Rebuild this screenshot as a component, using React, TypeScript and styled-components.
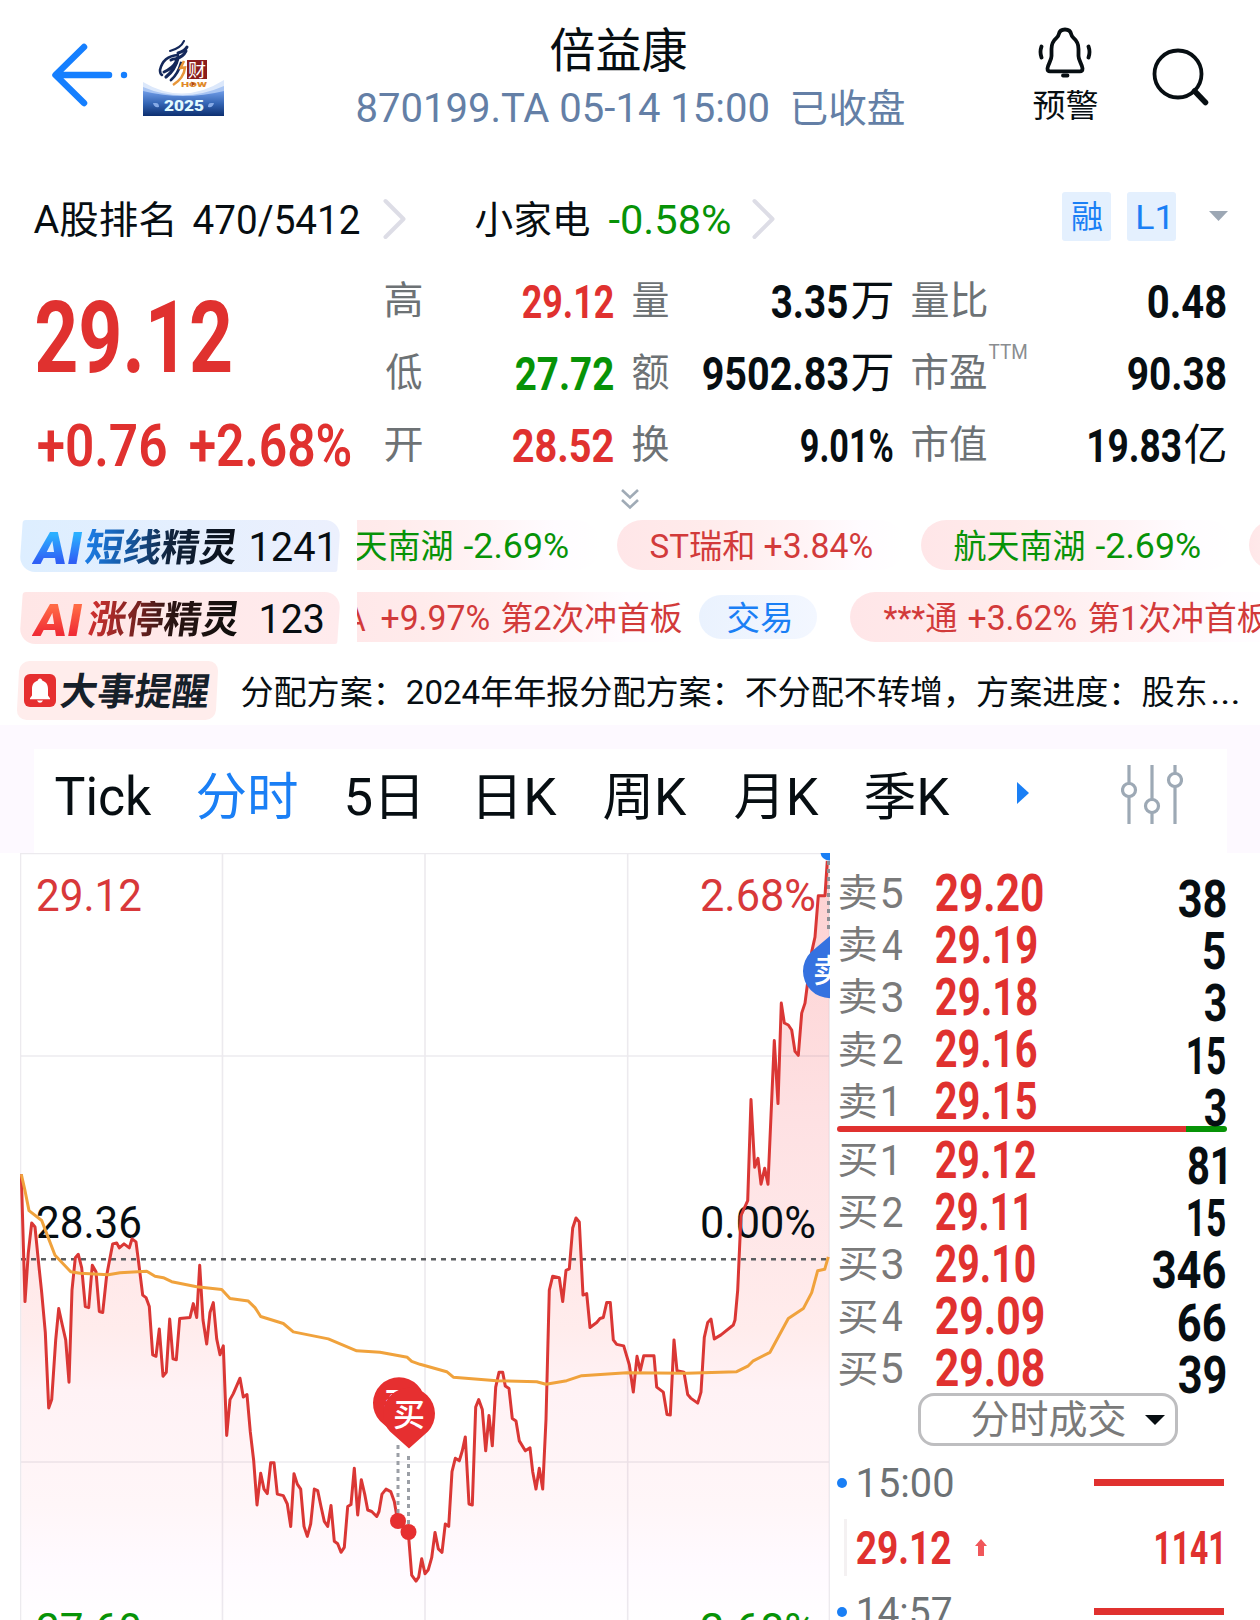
import React, { useLayoutEffect, useState } from "react";
import styled, { createGlobalStyle } from "styled-components";

const FONT = 'Roboto, "Noto Sans CJK SC", sans-serif';
const RED = "#e0312f";
const GREEN = "#079307";
const INK = "#070e12";
const GREY = "#6d7275";
const BLUE = "#1a7ff5";
const UP_TEXT = "#d23a3a";

const GlobalStyle = createGlobalStyle`
  body { margin: 0; background: #fff; font-family: ${FONT}; color: ${INK}; overflow: hidden; }
  * { box-sizing: border-box; }
  svg { display: block; flex: none; }
`;

/* ---------- text set to an exact measure ---------- */

const FitBox = styled.span<{ $w: number; $size: number }>`
  display: inline-block;
  flex: none;
  width: ${(p) => p.$w}px;
  height: ${(p) => p.$size}px;
  line-height: ${(p) => p.$size}px;
  font-size: ${(p) => p.$size}px;
`;
const FitInner = styled.span<{ $color: string; $weight: number; $fill?: string }>`
  display: inline-block;
  white-space: pre;
  transform-origin: 0 50%;
  color: ${(p) => (p.$fill ? "transparent" : p.$color)};
  font-weight: ${(p) => p.$weight};
  ${(p) => p.$fill && `background: ${p.$fill}; background-clip: text; -webkit-background-clip: text;`}
`;

type FitProps = {
  children: string;
  w: number;
  size: number;
  color?: string;
  weight?: number;
  fill?: string;
  slant?: number;
};

let pen: CanvasRenderingContext2D | null = null;

function Fit({ children, w, size, color = INK, weight = 400, fill, slant = 0 }: FitProps) {
  const [t, setT] = useState("none");
  useLayoutEffect(() => {
    pen = pen || document.createElement("canvas").getContext("2d");
    if (!pen) return;
    pen.font = `${weight} ${size}px ${FONT}`;
    const m = pen.measureText(children);
    const left = -m.actualBoundingBoxLeft;
    const k = w / (m.actualBoundingBoxRight - left);
    setT(`translate(${0.5 - left * k}px, 0.5px) skewX(${-slant}deg) scaleX(${k})`);
  }, [children, w, size, weight, slant]);
  return (
    <FitBox $w={w} $size={size}>
      <FitInner $color={color} $weight={weight} $fill={fill} style={{ transform: t }}>
        {children}
      </FitInner>
    </FitBox>
  );
}

/* ---------- page ---------- */

const Screen = styled.main`
  width: 1260px;
  height: 1620px;
  overflow: hidden;
  background: #fff;
  display: flex;
  flex-direction: column;
`;

const Header = styled.header`
  height: 178px;
  flex: none;
  display: grid;
  grid-template-columns: 330px 600px 330px;
`;
const HeaderLeft = styled.div`
  display: flex;
  align-items: flex-start;
  padding: 40px 0 0 50px;
  gap: 15px;
`;
const HeaderTitle = styled.div`
  display: flex;
  flex-direction: column;
  align-items: center;
  padding-top: 21px;
`;
const NameRow = styled.div`
  height: 56px;
  padding-right: 25px;
  display: flex;
  align-items: center;
`;
const CodeRow = styled.div`
  height: 62px;
  display: flex;
  align-items: center;
  gap: 24px;
`;
const HeaderRight = styled.div`
  display: flex;
  padding: 25px 0 0 103px;
  gap: 54px;
`;
const Alert = styled.button`
  border: 0;
  padding: 0;
  background: none;
  width: 64px;
  display: flex;
  flex-direction: column;
  align-items: center;
  gap: 11px;
  font-family: inherit;
`;
const SearchWrap = styled.div`
  padding-top: 21px;
`;

const RankRow = styled.section`
  height: 82px;
  flex: none;
  display: flex;
  align-items: center;
  padding: 0 32px 0 33px;
`;
const Gap = styled.span<{ $w: number }>`
  flex: none;
  width: ${(p) => p.$w}px;
`;
const Tags = styled.div`
  margin-left: auto;
  display: flex;
  align-items: center;
  gap: 16px;
  padding-bottom: 6px;
`;
const Tag = styled.span`
  width: 49px;
  height: 49px;
  border-radius: 3px;
  background: #e4f0fe;
  display: flex;
  align-items: center;
  justify-content: center;
`;
const CaretWrap = styled.span`
  padding-left: 17px;
`;

const Quote = styled.section`
  height: 222px;
  flex: none;
  display: grid;
  grid-template-columns: 349px 228px 279px 333px;
  padding: 4px 0 0 36px;
`;
const PriceCol = styled.div`
  display: flex;
  flex-direction: column;
`;
const BigPrice = styled.div`
  height: 145px;
  display: flex;
  align-items: center;
`;
const Change = styled.div`
  height: 72px;
  padding-left: 1px;
  display: flex;
  align-items: center;
  gap: 23px;
`;
const StatCol = styled.div<{ $pl?: number }>`
  padding-left: ${(p) => p.$pl || 0}px;
`;
const Stat = styled.div`
  height: 72.3px;
  display: flex;
  align-items: center;
`;
const Sup = styled.span`
  align-self: flex-start;
  display: flex;
  padding: 5px 0 0 2px;
`;
const StatValue = styled.span`
  margin-left: auto;
  display: flex;
  align-items: center;
  gap: 4px;
`;
const Expand = styled.div`
  height: 34px;
  flex: none;
  display: flex;
  justify-content: center;
  padding-top: 6px;
`;

const TickerRow = styled.section`
  height: 72px;
  flex: none;
  display: flex;
  align-items: flex-start;
  padding: 4px 0 0 20px;
`;
const Genie = styled.div<{ $bg: string }>`
  position: relative;
  z-index: 0;
  width: 320px;
  height: 52px;
  padding: 2px 0 0 13px;
  display: flex;
  align-items: center;
  &::before {
    content: "";
    position: absolute;
    z-index: -1;
    inset: 0 1px;
    transform: skewX(-4deg);
    border-radius: 3px 16px 2px 16px;
    background: ${(p) => p.$bg};
  }
`;
const Marquee = styled.div<{ $shift: number }>`
  margin-left: 17px;
  width: 903px;
  height: 52px;
  overflow: hidden;
  display: flex;
  justify-content: flex-start;
  & > :first-child { margin-left: ${(p) => -p.$shift}px; }
`;
const Pill = styled.div<{ $tight?: boolean }>`
  flex: none;
  height: 50px;
  margin-right: 16px;
  padding: 1px ${(p) => (p.$tight ? 2 : 33)}px 0 33px;
  border-radius: ${(p) => (p.$tight ? "25px 0 0 25px" : "25px")};
  background: linear-gradient(90deg, #ffe6e8 0%, #ffebeb 30%, #fff4f6 65%, #fffcff 85%, #fff 100%);
  display: flex;
  align-items: center;
  gap: 12px;
`;
const Wide = styled.span`
  padding-left: 4px;
  display: flex;
`;
const TradePill = styled.button`
  flex: none;
  border: 0;
  width: 118px;
  height: 44px;
  margin: 3px 33px 0 0;
  border-radius: 22px;
  background: linear-gradient(90deg, #eaf2fe, #f3f7ff);
  display: flex;
  align-items: center;
  justify-content: center;
  font-family: inherit;
  padding: 0;
`;

const EventRow = styled.section`
  height: 65px;
  flex: none;
  display: flex;
  align-items: flex-start;
  padding: 1px 0 0 17px;
`;
const EventBadge = styled.div`
  position: relative;
  z-index: 0;
  width: 201px;
  height: 59px;
  padding: 0 0 0 7px;
  display: flex;
  align-items: center;
  gap: 5px;
  &::before {
    content: "";
    position: absolute;
    z-index: -1;
    inset: 0 1px;
    transform: skewX(-3deg);
    border-radius: 10px;
    background: #ffedec;
  }
`;
const EventText = styled.div`
  height: 60px;
  margin-left: 23px;
  display: flex;
  align-items: center;
  gap: 6px;
`;

const TabBand = styled.nav`
  height: 128px;
  flex: none;
  background: #fdf9ff;
  padding: 24px 33px 0 34px;
`;
const TabBar = styled.div`
  height: 104px;
  background: #fff;
  display: flex;
  align-items: center;
  padding: 0 44px 10px 21px;
`;
const PlayWrap = styled.span`
  padding: 0 0 6px 1px;
`;
const SettingsWrap = styled.span`
  margin-left: auto;
  padding-bottom: 3px;
`;

const Body = styled.section`
  flex: 1;
  min-height: 0;
  display: flex;
  padding-left: 20px;
`;

const Book = styled.aside`
  width: 430px;
  padding: 13px 33px 0 7px;
  display: flex;
  flex-direction: column;
`;
const BookRow = styled.div`
  flex: none;
  height: 52.2px;
  padding: 0 2px;
  display: flex;
  align-items: center;
`;
const BookLabel = styled.span`
  width: 96px;
  display: flex;
  align-items: center;
  gap: 6px;
`;
const Volume = styled.span`
  margin-left: auto;
  padding-top: 13px;
  display: flex;
`;
const Ratio = styled.div`
  flex: none;
  height: 6px;
  margin: -1px 0 1px;
  border-radius: 3px;
  background: linear-gradient(90deg, ${RED} 89.4%, ${GREEN} 89.4%);
`;
const Select = styled.button`
  flex: none;
  align-self: flex-start;
  margin: -1px 0 1px 81px;
  width: 260px;
  height: 53px;
  border: 3px solid #bebec0;
  border-radius: 16px;
  background: #fff;
  padding: 1px 10px 0 50px;
  display: flex;
  align-items: center;
  gap: 20px;
  font-family: inherit;
`;
const Deal = styled.div`
  flex: none;
  height: 129px;
`;
const DealTime = styled.div`
  height: 72px;
  display: flex;
  align-items: center;
  gap: 11px;
`;
const Dot = styled.i`
  width: 10px;
  height: 10px;
  border-radius: 50%;
  background: ${BLUE};
`;
const DealBar = styled.i`
  margin: 0 3px 0 auto;
  width: 130px;
  height: 7px;
  background: ${RED};
`;
const DealPrice = styled.div`
  height: 57px;
  margin-left: 7px;
  padding: 0 6px 0 9px;
  border-left: 3px solid #f4f1f2;
  display: flex;
  align-items: center;
`;
const DealQty = styled.span`
  margin-left: auto;
  display: flex;
`;

/* ---------- icons ---------- */

const BackIcon = () => (
  <svg width="78" height="70" viewBox="0 0 78 70" fill="none" stroke="#157fff" strokeWidth="6.5" strokeLinecap="round" strokeLinejoin="round">
    <path d="M34 7 5.500 35 34 63M6 35H59" />
    <circle cx="74" cy="35" r="3.200" fill="#157fff" stroke="none" />
  </svg>
);

const ShowLogo = () => (
  <svg width="81" height="76" viewBox="0 0 81 76">
    <defs>
      <linearGradient id="lgSky" x1="0" y1="0" x2="0" y2="1">
        <stop offset="0" stopColor="#6f9be6" />
        <stop offset=".5" stopColor="#3465b4" />
        <stop offset="1" stopColor="#0d2f70" />
      </linearGradient>
    </defs>
    <path d="M0 42Q40 66 81 40V76H0Z" fill="#dce8fb" />
    <path d="M0 47Q40 64 81 46V76H0Z" fill="#a9c5f3" />
    <path d="M0 51Q40 61 81 51V76H0Z" fill="url(#lgSky)" />
    <g fill="none" stroke="#14285a" strokeLinecap="round">
      <path d="M41 1Q38 8 27 11" strokeWidth="2" />
      <path d="M44 7Q42 11 35 13" strokeWidth="3" />
      <path d="M43 11Q40 17 34 18" strokeWidth="3" />
      <path d="M35 15Q20 16 17 30Q17 34 19 35" strokeWidth="2.600" />
      <path d="M28 20Q34 17 33 22Q30 28 21 32" strokeWidth="3" />
      <path d="M35 18Q32 30 23 37" strokeWidth="3.200" />
      <path d="M38 23Q35 34 28 40" strokeWidth="2.800" />
    </g>
    <path d="M41 21 37.500 28 42 27.500Q41 38 30 45" fill="none" stroke="#e8963a" strokeWidth="2.600" />
    <rect x="44" y="20" width="20" height="19" fill="#8a1d1c" />
    <text x="54" y="36.500" textAnchor="middle" fontSize="18" fontFamily={FONT} fill="#fff">财</text>
    <text x="51" y="46.500" textAnchor="middle" fontSize="7.500" fontWeight="900" textLength="26" lengthAdjust="spacingAndGlyphs" fontFamily={FONT} fill="#e08a2c">HOW</text>
    <path d="m48.500 41.500 4 2.500-4 2.500z" fill="#b44a17" />
    <text x="41" y="71" textAnchor="middle" fontSize="15" fontWeight="900" textLength="40" lengthAdjust="spacingAndGlyphs" fontFamily={FONT} fill="#e2fbff">2025</text>
    <path d="M10 63q1 5 6 4q0-4-3-4M71 63q-1 5-6 4q0-4 3-4" fill="#86aae6" />
  </svg>
);

const BellIcon = () => (
  <svg width="54" height="53" viewBox="0 0 54 53" fill="none" stroke={INK} strokeWidth="3.800" strokeLinecap="round" strokeLinejoin="round">
    <path d="M27 4.500c-3.500 0-5.600 1.800-6.200 4.600-.4 2-1 2.600-2.300 3.800-3.500 3-5 6-5 11.100v7c0 4.500-3.500 8-4 12.500 0 2 1 2.800 2.500 2.800h30c1.500 0 2.500-.8 2.500-2.800-.5-4.500-4-8-4-12.500v-7c0-5.100-1.500-8.100-5-11.100-1.300-1.200-1.900-1.800-2.300-3.800C32.600 6.300 30.500 4.500 27 4.500Z" />
    <path d="M3.500 21.500Q1.500 27 3.500 32.500M50.500 21.500Q52.500 27 50.500 32.500M25 50.500h4.500" />
  </svg>
);

const SearchIcon = () => (
  <svg width="60" height="62" viewBox="0 0 60 62" fill="none" stroke={INK} strokeLinecap="round">
    <circle cx="27" cy="28" r="23.500" strokeWidth="3.800" />
    <path d="m43.500 45 11 11.500" strokeWidth="5.500" />
  </svg>
);

const ChevronIcon = () => (
  <svg width="24" height="42" viewBox="0 0 24 42" fill="none" stroke="#dddde6" strokeWidth="4" strokeLinecap="round" strokeLinejoin="round">
    <path d="M3.500 3 21.500 21 3.500 39" />
  </svg>
);

const Caret = ({ w, h, color }: { w: number; h: number; color: string }) => (
  <svg width={w} height={h} viewBox="0 0 20 10" preserveAspectRatio="none">
    <path d="M0 0H20L10 10Z" fill={color} />
  </svg>
);

const DoubleChevron = () => (
  <svg width="18" height="22" viewBox="0 0 18 22" fill="none" stroke="#a0abb6" strokeWidth="2.600">
    <path d="m1 2 8 7.500L17 2M1 12l8 7.500 8-7.500" />
  </svg>
);

const EventBell = () => (
  <svg width="32" height="33" viewBox="0 0 32 33">
    <rect width="32" height="33" rx="6" fill="#e62f30" />
    <path d="M16 4.500c1.400 0 2 1 2.200 2C22.500 8 24 11 24 15v6.500l2 2.800v1H6v-1l2-2.800V15c0-4 1.500-7 5.800-8.500.2-1 .8-2 2.200-2ZM13 26.500h6q-1 2.200-3 2.200t-3-2.200Z" fill="#fff" />
  </svg>
);

const SlidersIcon = () => (
  <svg width="62" height="59" viewBox="0 0 62 59" fill="#fff" stroke="#9da9b5" strokeWidth="3.200">
    <path d="M8 0V59M31 0V59M54 0V59" />
    <circle cx="8" cy="25" r="6.500" />
    <circle cx="31" cy="41" r="6.500" />
    <circle cx="54" cy="15" r="6.500" />
  </svg>
);

const PlayIcon = () => (
  <svg width="12" height="22" viewBox="0 0 12 22">
    <path d="M0 0 12 11 0 22Z" fill={BLUE} />
  </svg>
);

const UpArrow = () => (
  <svg width="12" height="17" viewBox="0 0 12 17">
    <path d="M6 0 12 7H9V17H3V7H0Z" fill="#f0575a" />
  </svg>
);

/* ---------- intraday chart ---------- */

/* Samples are [time, level] pairs; three time units and about two level units make one pixel. */
const PRICE = `64,672 75,928 85,830 95,770 105,778 115,845 125,910 136,990 146,1142 155,1125 167,1005 176,942 187,975 197,1005 207,1090
216,905 226,840 235,833 245,860 256,938 266,940 277,855 288,868 298,948 308,950 320,875 338,812 350,810 358,820 372,812 388,820 396,802
408,808 418,860 428,915 438,920 448,938 458,1035 468,1038 478,983 489,1078 499,1070 509,963 519,1043 529,1045 539,962 570,960 580,932
590,960 599,855 609,965 620,1013 630,950 640,930 650,1003 660,1035 670,1017 680,1197 690,1125 700,1113 720,1082 730,1120 741,1115
751,1190 761,1248 771,1337 782,1273 792,1305 802,1314 812,1252 822,1252 832,1315 850,1318 862,1335 872,1380 882,1274 892,1295 902,1305
912,1380 922,1400 932,1375 943,1305 953,1308 963,1340 973,1370 983,1380 993,1338 1003,1410 1013,1415 1023,1432 1033,1422 1043,1340
1053,1336 1063,1263 1073,1357 1084,1286 1094,1315 1103,1347 1115,1350 1130,1360 1137,1350 1146,1315 1158,1305 1172,1310 1183,1330
1193,1369 1214,1385 1225,1392 1235,1478 1248,1490 1256,1482 1265,1445 1275,1475 1285,1467 1295,1443 1305,1392 1315,1425 1326,1432
1336,1375 1346,1380 1356,1270 1366,1243 1378,1248 1387,1228 1396,1200 1407,1335 1417,1337 1427,1140 1436,1125 1447,1145 1457,1228
1467,1157 1477,1218 1487,1100 1497,1070 1508,1070 1516,1098 1527,1103 1537,1163 1548,1168 1558,1208 1576,1228 1590,1222 1598,1270
1608,1305 1618,1263 1628,1305 1638,1165 1648,905 1658,877 1678,880 1688,928 1698,865 1708,862 1718,780 1728,760 1738,768 1749,915
1760,912 1770,980 1790,970 1800,962 1810,960 1820,930 1831,930 1840,1005 1850,1014 1871,1017 1888,1055 1900,1110 1911,1038 1921,1067
1931,1037 1962,1037 1970,1100 1990,1110 2001,1155 2011,1156 2022,1005 2031,1067 2052,1070 2063,1115 2072,1122 2093,1132 2103,1110
2113,1000 2123,970 2133,963 2143,1003 2163,995 2200,975 2205,965 2213,905 2223,755 2243,725 2253,522 2264,658 2274,640 2283,692
2294,660 2304,692 2323,403 2334,530 2344,328 2353,368 2365,372 2375,382 2385,425 2395,433 2405,348 2415,328 2426,270 2435,225
2445,195 2455,112 2475,112 2482,42`;

const AVERAGE = `64,672 75,705 87,745 125,765 145,800 165,835 212,868 240,871 325,874 360,870 440,867 465,877 490,880 515,888 590,898 665,904
690,922 745,927 765,940 782,958 850,972 880,989 985,1003 1070,1027 1140,1030 1222,1040 1235,1048 1260,1054 1340,1069 1360,1080 1490,1087
1610,1089 1638,1094 1700,1087 1745,1077 1880,1071 2060,1072 2210,1069 2245,1057 2260,1047 2310,1030 2365,962 2410,942 2435,910 2453,866
2474,863 2485,838`;

const plot = (series: string) =>
  series
    .trim()
    .split(/\s+/)
    .map((s) => {
      const [t, v] = s.split(",").map(Number);
      return `${(t / 3 - 20).toFixed(1)},${(v * 0.4974 - 13).toFixed(1)}`;
    })
    .join(" ");

const AXIS = [
  { x: 16, y: 57.5, w: 106, text: "29.12", fill: "#d8383a" },
  { x: 680, y: 57.5, w: 116, text: "2.68%", fill: "#d8383a" },
  { x: 16, y: 384.5, w: 106, text: "28.36", fill: INK },
  { x: 680, y: 384.5, w: 116, text: "0.00%", fill: INK },
  { x: 16, y: 792, w: 106, text: "27.60", fill: GREEN },
  { x: 680, y: 792, w: 116, text: "2.68%", fill: GREEN },
];

const BuyPin = ({ x, y }: { x: number; y: number }) => (
  <g transform={`translate(${x} ${y})`}>
    <path d="M0 35 L-19 18 A26 26 0 1 1 19 18 Z" fill="#e62f30" />
    <text x="0" y="12" textAnchor="middle" fontSize="32" fontWeight="500" fontFamily={FONT} fill="#fff">买</text>
  </g>
);

const Chart = () => {
  const price = plot(PRICE);
  return (
    <svg width="810" height="767" viewBox="0 0 810 767">
      <defs>
        <linearGradient id="area" gradientUnits="userSpaceOnUse" x1="0" y1="0" x2="0" y2="767">
          <stop offset="0" stopColor="#fdd0d0" />
          <stop offset=".35" stopColor="#fee1e3" />
          <stop offset=".62" stopColor="#ffecec" />
          <stop offset=".7" stopColor="#fff2f5" />
          <stop offset=".85" stopColor="#fff6f8" />
          <stop offset=".93" stopColor="#fffaff" />
          <stop offset="1" stopColor="#fffeff" />
        </linearGradient>
      </defs>
      <polygon points={`${price} 809,12 809,767 1.500,767`} fill="url(#area)" />
      <path d="M.5 767V.5H809.500V767M202.500 0V767M405 0V767M607.700 0V767M0 203H810M0 609H810" fill="none" stroke="#6a5f78" strokeOpacity=".13" strokeWidth="1.600" />
      {AXIS.map((a) => (
        <text key={a.text + a.y} x={a.x} y={a.y} fontSize="44" fontFamily={FONT} textLength={a.w} lengthAdjust="spacingAndGlyphs" fill={a.fill}>
          {a.text}
        </text>
      ))}
      <path d="M1 406.300H808" stroke="#5a5d60" strokeWidth="2.600" strokeDasharray="5 5" />
      <polyline points={price} fill="none" stroke="#da3735" strokeWidth="3" strokeLinejoin="round" />
      <polyline points={plot(AVERAGE)} fill="none" stroke="#f0a23c" strokeWidth="3" strokeLinejoin="round" />
      <path d="M378 592V662M388.500 603V673" stroke="#9b9fa6" strokeWidth="3" strokeDasharray="4 4" />
      <circle cx="378" cy="668" r="8" fill="#e62f30" />
      <circle cx="388.500" cy="679" r="8" fill="#e62f30" />
      <BuyPin x={379} y={550} />
      <BuyPin x={389} y={560.5} />
      <path d="M808.500 8V80" stroke="#8d8f95" strokeWidth="3" strokeDasharray="4 4" />
      <path d="M810 83 L791 99 A27 27 0 1 0 829 99 Z" fill="#3572e0" />
      <text x="793" y="129" fontSize="32" fontWeight="500" fontFamily={FONT} fill="#fff">卖</text>
      <circle cx="809" cy="-1" r="8.500" fill={BLUE} />
    </svg>
  );
};

/* ---------- data ---------- */

type Level = [string, string, string, number, string, number];
const ASKS: Level[] = [
  ["卖", "5", "29.20", 107, "38", 47],
  ["卖", "4", "29.19", 101, "5", 22],
  ["卖", "3", "29.18", 101, "3", 21],
  ["卖", "2", "29.16", 101, "15", 37],
  ["卖", "1", "29.15", 101, "3", 21],
];
const BIDS: Level[] = [
  ["买", "1", "29.12", 100, "81", 37],
  ["买", "2", "29.11", 91, "15", 37],
  ["买", "3", "29.10", 99, "346", 73],
  ["买", "4", "29.09", 108, "66", 47],
  ["买", "5", "29.08", 108, "39", 47],
];

const BookLine = ({ level }: { level: Level }) => {
  const [side, n, price, pw, vol, vw] = level;
  return (
    <BookRow>
      <BookLabel>
        <Fit w={37} size={38} color="#7a7a7a">{side}</Fit>
        <Fit w={n === "1" ? 12 : 20} size={43} color="#7a7a7a">{n}</Fit>
      </BookLabel>
      <Fit w={pw} size={51} weight={700} color={RED}>{price}</Fit>
      <Volume>
        <Fit w={vw} size={51} weight={700}>{vol}</Fit>
      </Volume>
    </BookRow>
  );
};

type StatItem = { label: string; lw: number; sup?: string; value: string; w: number; unit?: string; color?: string };
const STATS: { pl: number; items: StatItem[] }[] = [
  {
    pl: 0,
    items: [
      { label: "高", lw: 36, value: "29.12", w: 91, color: RED },
      { label: "低", lw: 36, value: "27.72", w: 98, color: GREEN },
      { label: "开", lw: 36, value: "28.52", w: 101, color: RED },
    ],
  },
  {
    pl: 19,
    items: [
      { label: "量", lw: 36, value: "3.35", w: 76, unit: "万" },
      { label: "额", lw: 36, value: "9502.83", w: 145, unit: "万" },
      { label: "换", lw: 36, value: "9.01%", w: 92 },
    ],
  },
  {
    pl: 19,
    items: [
      { label: "量比", lw: 75, value: "0.48", w: 77 },
      { label: "市盈", lw: 75, sup: "TTM", value: "90.38", w: 98 },
      { label: "市值", lw: 75, value: "19.83", w: 92, unit: "亿" },
    ],
  },
];

const TABS: { text: string; w: number; gap: number; size: number }[] = [
  { text: "Tick", w: 96, gap: 46, size: 53 },
  { text: "分时", w: 100, gap: 49, size: 51 },
  { text: "5日", w: 71, gap: 61, size: 51 },
  { text: "日K", w: 78, gap: 47, size: 51 },
  { text: "周K", w: 83, gap: 48, size: 51 },
  { text: "月K", w: 84, gap: 46, size: 51 },
  { text: "季K", w: 85, gap: 67, size: 51 },
];

export default function App() {
  return (
    <Screen>
      <GlobalStyle />
      <Header>
        <HeaderLeft>
          <BackIcon />
          <ShowLogo />
        </HeaderLeft>
        <HeaderTitle>
          <NameRow>
            <Fit w={136} size={47}>倍益康</Fit>
          </NameRow>
          <CodeRow>
            <Fit w={411} size={40} color="#647fa6">870199.TA 05-14 15:00</Fit>
            <Fit w={112} size={39} color="#647fa6">已收盘</Fit>
          </CodeRow>
        </HeaderTitle>
        <HeaderRight>
          <Alert>
            <BellIcon />
            <Fit w={64} size={32}>预警</Fit>
          </Alert>
          <SearchWrap>
            <SearchIcon />
          </SearchWrap>
        </HeaderRight>
      </Header>

      <RankRow>
        <Fit w={139} size={38}>A股排名</Fit>
        <Gap $w={21} />
        <Fit w={166} size={41}>470/5412</Fit>
        <Gap $w={23} />
        <ChevronIcon />
        <Gap $w={69} />
        <Fit w={114} size={38}>小家电</Fit>
        <Gap $w={19} />
        <Fit w={122} size={41} color={GREEN}>-0.58%</Fit>
        <Gap $w={21} />
        <ChevronIcon />
        <Tags>
          <Tag><Fit w={30} size={32} color={BLUE}>融</Fit></Tag>
          <Tag><Fit w={30} size={33} color={BLUE}>L1</Fit></Tag>
          <CaretWrap><Caret w={19} h={10} color="#9ca7b4" /></CaretWrap>
        </Tags>
      </RankRow>

      <Quote>
        <PriceCol>
          <BigPrice><Fit w={194} size={100} weight={700} color={RED}>29.12</Fit></BigPrice>
          <Change>
            <Fit w={129} size={60} weight={600} color={RED}>+0.76</Fit>
            <Fit w={161} size={60} weight={600} color={RED}>+2.68%</Fit>
          </Change>
        </PriceCol>
        {STATS.map((col, i) => (
          <StatCol key={i} $pl={col.pl}>
            {col.items.map((s) => (
              <Stat key={s.label}>
                <Fit w={s.lw} size={39} color={GREY}>{s.label}</Fit>
                {s.sup && <Sup><Fit w={38} size={21} color="#8a8d90">{s.sup}</Fit></Sup>}
                <StatValue>
                  <Fit w={s.w} size={47} weight={700} color={s.color}>{s.value}</Fit>
                  {s.unit && <Fit w={41} size={43}>{s.unit}</Fit>}
                </StatValue>
              </Stat>
            ))}
          </StatCol>
        ))}
      </Quote>

      <Expand><DoubleChevron /></Expand>

      <TickerRow>
        <Genie $bg="linear-gradient(90deg,#ddeeff,#ecf0fd)">
          <Fit w={46} size={45} weight={900} slant={10} fill="linear-gradient(180deg,#2bb0ff 20%,#2f5ff5 80%)">AI</Fit>
          <Gap $w={7} />
          <Fit w={151} size={39} weight={700} slant={8} fill="linear-gradient(90deg,#1c7ee8 0%,#15559c 30%,#10233c 55%,#0a0f16 100%)">短线精灵</Fit>
          <Gap $w={14} />
          <Fit w={79} size={40}>1241</Fit>
        </Genie>
        <Marquee $shift={68}>
          <Pill><Fit w={129} size={33} color={GREEN}>航天南湖</Fit><Fit w={105} size={35} color={GREEN}>-2.69%</Fit></Pill>
          <Pill><Fit w={102} size={33} color={UP_TEXT}>ST瑞和</Fit><Fit w={108} size={35} color={UP_TEXT}>+3.84%</Fit></Pill>
          <Pill><Fit w={129} size={33} color={GREEN}>航天南湖</Fit><Fit w={105} size={35} color={GREEN}>-2.69%</Fit></Pill>
          <Pill />
        </Marquee>
      </TickerRow>

      <TickerRow>
        <Genie $bg="linear-gradient(90deg,#ffe6e6,#ffebed)">
          <Fit w={46} size={45} weight={900} slant={10} fill="linear-gradient(180deg,#ff6a45 20%,#f02c35 80%)">AI</Fit>
          <Gap $w={9} />
          <Fit w={151} size={39} weight={700} slant={8} fill="linear-gradient(90deg,#d23030 0%,#7c2422 30%,#2a1413 55%,#0e0e0c 100%)">涨停精灵</Fit>
          <Gap $w={22} />
          <Fit w={61} size={40}>123</Fit>
        </Genie>
        <Marquee $shift={45}>
          <Pill $tight>
            <Fit w={20} size={34} color={UP_TEXT}>A</Fit>
            <Wide><Fit w={108} size={35} color={UP_TEXT}>+9.97%</Fit></Wide>
            <Fit w={180} size={33} color={UP_TEXT}>第2次冲首板</Fit>
          </Pill>
          <TradePill><Fit w={63} size={33} color={BLUE}>交易</Fit></TradePill>
          <Pill>
            <Fit w={73} size={33} color={UP_TEXT}>***通</Fit>
            <Fit w={108} size={35} color={UP_TEXT}>+3.62%</Fit>
            <Fit w={180} size={33} color={UP_TEXT}>第1次冲首板</Fit>
          </Pill>
        </Marquee>
      </TickerRow>

      <EventRow>
        <EventBadge>
          <EventBell />
          <Fit w={147} size={38} weight={700} slant={8} color="#16202a">大事提醒</Fit>
        </EventBadge>
        <EventText>
          <Fit w={965} size={33}>分配方案：2024年年报分配方案：不分配不转增，方案进度：股东</Fit>
          <Fit w={26} size={33}>...</Fit>
        </EventText>
      </EventRow>

      <TabBand>
        <TabBar>
          {TABS.map((t) => (
            <React.Fragment key={t.text}>
              <Fit w={t.w} size={t.size} color={t.text === "分时" ? BLUE : INK}>{t.text}</Fit>
              <Gap $w={t.gap} />
            </React.Fragment>
          ))}
          <PlayWrap><PlayIcon /></PlayWrap>
          <SettingsWrap><SlidersIcon /></SettingsWrap>
        </TabBar>
      </TabBand>

      <Body>
        <Chart />
        <Book>
          {ASKS.map((l) => <BookLine key={l[2]} level={l} />)}
          <Ratio />
          {BIDS.map((l) => <BookLine key={l[2]} level={l} />)}
          <Select>
            <Fit w={154} size={39} color="#7a7a7a">分时成交</Fit>
            <Caret w={20} h={10} color={INK} />
          </Select>
          <Deal>
            <DealTime><Dot /><Fit w={94} size={41} color={GREY}>15:00</Fit><DealBar /></DealTime>
            <DealPrice>
              <Fit w={94} size={46} weight={700} color={RED}>29.12</Fit>
              <Gap $w={25} />
              <UpArrow />
              <DealQty><Fit w={66} size={46} weight={700} color={RED}>1141</Fit></DealQty>
            </DealPrice>
          </Deal>
          <Deal>
            <DealTime><Dot /><Fit w={93} size={41} color={GREY}>14:57</Fit><DealBar /></DealTime>
          </Deal>
        </Book>
      </Body>
    </Screen>
  );
}
